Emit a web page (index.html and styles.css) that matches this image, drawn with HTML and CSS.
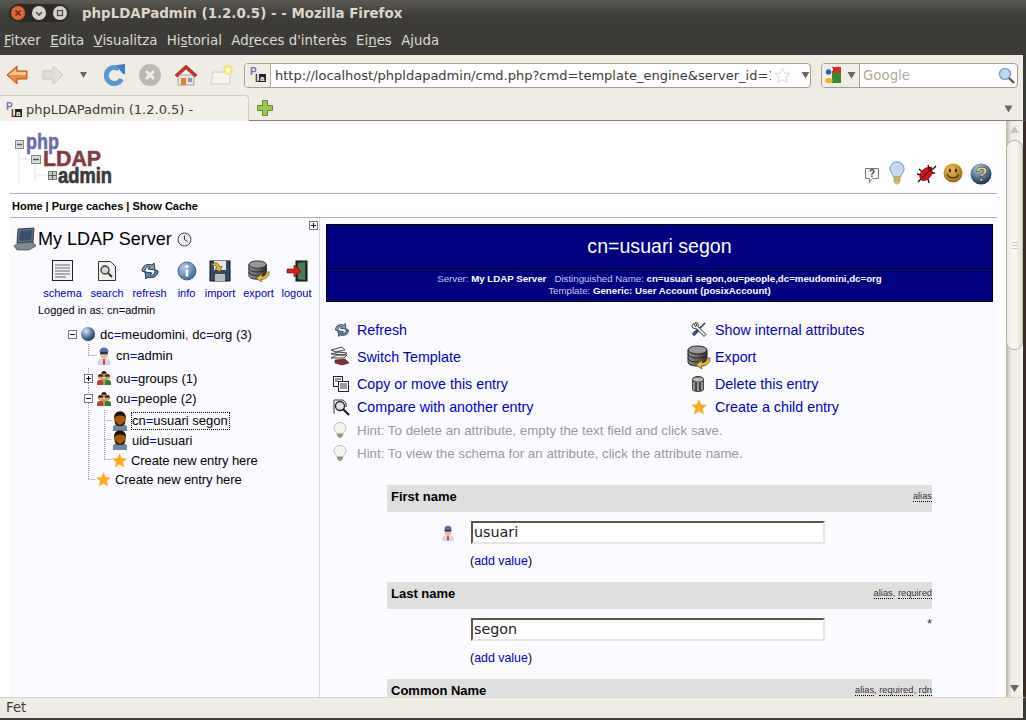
FILE: index.html
```html
<!DOCTYPE html>
<html lang="ca">
<head>
<meta charset="utf-8">
<title>phpLDAPadmin (1.2.0.5) - - Mozilla Firefox</title>
<link rel="stylesheet" href="styles.css">
</head>
<body>
<svg class="defs" width="0" height="0" aria-hidden="true">
  <defs>
    <radialGradient id="gBlue" cx="35%" cy="30%" r="80%"><stop offset="0" stop-color="#b8cfe6"/><stop offset="1" stop-color="#2f5f9a"/></radialGradient>
    <radialGradient id="gGlobe" cx="35%" cy="30%" r="75%"><stop offset="0" stop-color="#dfe8f2"/><stop offset=".55" stop-color="#5c7ea8"/><stop offset="1" stop-color="#1d3350"/></radialGradient>
    <radialGradient id="gSmile" cx="40%" cy="30%" r="75%"><stop offset="0" stop-color="#f0c050"/><stop offset="1" stop-color="#9a6010"/></radialGradient>
    <radialGradient id="gHelp" cx="40%" cy="25%" r="80%"><stop offset="0" stop-color="#b9cbdc"/><stop offset=".6" stop-color="#4a6c90"/><stop offset="1" stop-color="#12263e"/></radialGradient>
    <linearGradient id="gDb" x1="0" x2="1"><stop offset="0" stop-color="#8c8c8c"/><stop offset=".5" stop-color="#666"/><stop offset="1" stop-color="#333"/></linearGradient>
    <symbol id="i-refresh" viewBox="0 0 22 22">
      <path d="M3 11C3 6 8 3 13 5L15 3l1 7-7-1 2-2C8 6 6 8 6 12z" fill="#7f9fc0" stroke="#27384c" stroke-width="1"/>
      <path d="M19 11c0 5-5 8-10 6l-2 2-1-7 7 1-2 2c3 1 5-1 5-5z" fill="#5d83aa" stroke="#27384c" stroke-width="1"/>
    </symbol>
    <symbol id="i-star" viewBox="0 0 16 16">
      <path d="M8 .5l2.200 5 5.300.5-4 3.600 1.200 5.400L8 12.200 3.300 15l1.200-5.400-4-3.600 5.300-.5z" fill="#fbac1c" stroke="#f6c25a" stroke-width=".5"/>
    </symbol>
    <symbol id="i-man" viewBox="0 0 16 20">
      <path d="M1 20v-4c0-2 3-3 7-3s7 1 7 3v4z" fill="#6d87a5"/>
      <path d="M6 13h4l-2 3z" fill="#dde"/>
      <ellipse cx="8" cy="8" rx="6" ry="7.500" fill="#a5590f"/>
      <path d="M2 8C2 2 5 .5 8 .5S14 2 14 8c-1-3-3-3.500-6-3.500S3 5 2 8z" fill="#1a1208"/>
      <path d="M4 10c1 5 7 5 8 0l1 2c-1 3-3 3-5 3s-4 0-5-3z" fill="#2a1a08"/>
    </symbol>
    <symbol id="i-admin" viewBox="0 0 14 18">
      <path d="M1 18v-3c0-2 3-3 6-3s6 1 6 3v3z" fill="#d5d9e4" stroke="#9aa" stroke-width=".4"/>
      <path d="M6.300 12h1.400l.5 5-1.200 1-1.200-1z" fill="#d33"/>
      <ellipse cx="7" cy="7.500" rx="4" ry="4.500" fill="#f0b896"/>
      <path d="M2.500 5C3 1.500 5 .5 7 .5s4 1 4.500 4.500z" fill="#5a6ab8"/>
      <rect x="3" y="5" width="8" height="2.200" rx="1" fill="#23304f"/>
    </symbol>
    <symbol id="i-group" viewBox="0 0 16 16">
      <circle cx="8" cy="4" r="3" fill="#c9924f"/><path d="M5 3a3 3 0 0 1 6 0z" fill="#222"/>
      <path d="M4 16v-5c0-2 2-3 4-3s4 1 4 3v5z" fill="#b8a050"/>
      <circle cx="4" cy="7" r="2.800" fill="#e2a57a"/><path d="M1 6.500a3 3 0 0 1 6 0z" fill="#4a2410"/>
      <path d="M0 16v-3c0-2 2-3 4-3s3 1 3 3v3z" fill="#b8403a"/>
      <circle cx="12" cy="7" r="2.800" fill="#d79a62"/><path d="M9 6.500a3 3 0 0 1 6 0z" fill="#332"/>
      <path d="M9 16v-3c0-2 1-3 3-3s4 1 4 3v3z" fill="#3c7a3a"/>
    </symbol>
    <symbol id="i-minus" viewBox="0 0 9 9"><rect x=".5" y=".5" width="8" height="8" fill="#fff" stroke="#777"/><path d="M2 4.500h5" stroke="#111"/></symbol>
    <symbol id="i-plus" viewBox="0 0 9 9"><rect x=".5" y=".5" width="8" height="8" fill="#fff" stroke="#777"/><path d="M2 4.500h5M4.500 2v5" stroke="#111"/></symbol>
    <symbol id="i-bulb" viewBox="0 0 16 24">
      <path d="M8 1C4 1 1 4 1 8c0 3 3 5 3.500 8h7C12 13 15 11 15 8c0-4-3-7-7-7z" fill="#c8daf2" stroke="#6f96cc"/>
      <path d="M5 16h6v5l-2 2H7l-2-2z" fill="#e4cc6c" stroke="#a08a30" stroke-width=".6"/>
      <path d="M5 18h6M5 20h6" stroke="#a08a30" stroke-width=".7"/>
    </symbol>
    <symbol id="i-hint" viewBox="0 0 14 16">
      <path d="M7 .5C3.500.5 1 3 1 6c0 2.500 2.500 3.500 3 6h6c.5-2.500 3-3.500 3-6 0-3-2.500-5.500-6-5.500z" fill="#f4f4ef" stroke="#bdbdb5"/>
      <path d="M4.500 12h5v2l-1.500 1.500H6L4.500 14z" fill="#a09a78" stroke="#77704e" stroke-width=".5"/>
    </symbol>
    <symbol id="i-db" viewBox="0 0 24 24">
      <path d="M1 5v12c0 3 5 4 10 4s9-1 9-4V5z" fill="url(#gDb)" stroke="#222"/>
      <ellipse cx="10.500" cy="5" rx="9.500" ry="4" fill="#999" stroke="#222"/>
      <path d="M1 9c0 3 5 4 9.500 4S20 12 20 9M1 13c0 3 5 4 9.500 4S20 16 20 13" fill="none" stroke="#222"/>
      <path d="M23 13c0 5-3 8-9 8l1 3-6-4 6-5v3c3 0 5-2 5-5z" fill="#e8c040" stroke="#6a5410" stroke-width=".8"/>
    </symbol>
  </defs>
</svg>

<div class="window">
  <header class="titlebar">
    <div class="wm-buttons">
      <span class="wm wm-close"><svg width="14" height="14" viewBox="0 0 14 14"><path d="M4.500 4.500l5 5m0-5l-5 5" stroke="#6a2a12" stroke-width="1.600"/></svg></span>
      <span class="wm"><svg width="14" height="14" viewBox="0 0 14 14"><path d="M4 6l3 3 3-3" fill="none" stroke="#55514a" stroke-width="1.600"/></svg></span>
      <span class="wm"><svg width="14" height="14" viewBox="0 0 14 14"><rect x="4.500" y="4.500" width="5" height="5" fill="none" stroke="#55514a" stroke-width="1.400"/></svg></span>
    </div>
    <div class="title-text">phpLDAPadmin (1.2.0.5) - - Mozilla Firefox</div>
  </header>

  <nav class="menubar">
    <span><u>F</u>itxer</span><span><u>E</u>dita</span><span><u>V</u>isualitza</span><span>Hi<u>s</u>torial</span><span>Ad<u>r</u>eces d'interès</span><span>Ei<u>n</u>es</span><span>A<u>j</u>uda</span>
  </nav>

  <div class="toolbar">
    <svg class="tb-back" width="22" height="22" viewBox="0 0 22 22"><path d="M1 11L11 2v5h10v8H11v5z" fill="#ee8a35" stroke="#b9501a"/><path d="M3 11l7-6v3h10v3z" fill="#f8c78e"/></svg>
    <svg class="tb-fwd" width="22" height="22" viewBox="0 0 22 22"><path d="M21 11L11 2v5H1v8h10v5z" fill="#e2dfd8" stroke="#c9c5bb"/></svg>
    <svg class="tb-drop" width="10" height="8" viewBox="0 0 10 8"><path d="M1 1h7L4.500 7z" fill="#6a675f"/></svg>
    <svg class="tb-reload" width="22" height="22" viewBox="0 0 22 22"><path d="M17.500 15A8 8 0 1 1 15 5" fill="none" stroke="#5a96d6" stroke-width="5"/><path d="M12 1h1l8-1v10h-2z" fill="#3f7cc0"/></svg>
    <svg class="tb-stop" width="22" height="22" viewBox="0 0 22 22"><circle cx="11" cy="11" r="11" fill="#bdb9b1"/><path d="M7 7l8 8m0-8l-8 8" stroke="#efede8" stroke-width="2.600"/></svg>
    <svg class="tb-home" width="22" height="22" viewBox="0 0 22 22"><path d="M3 11v10h16V11z" fill="#e9e5dc" stroke="#8e887c" stroke-width=".7"/><path d="M11 1L0 11l2 2 9-8 9 8 2-2z" fill="#c6312c" stroke="#8f2320" stroke-width=".6"/><rect x="6" y="14" width="5" height="7" fill="#d9822b"/><rect x="13" y="14" width="4" height="4" fill="#8a97a8"/></svg>
    <svg class="tb-mark" width="24" height="22" viewBox="0 0 24 22"><path d="M3 8h17v12H1z" fill="#f6f4ef" stroke="#cfcabf"/><circle cx="18" cy="6" r="5" fill="#f5e76a"/><path d="M18 2.500l1 2.500 2.500.2-2 1.600.7 2.500-2.200-1.400-2.200 1.400.7-2.500-2-1.600 2.500-.2z" fill="#fff"/></svg>
    <div class="urlbar">
      <span class="site-id"><svg class="favicon" width="16" height="16" viewBox="0 0 16 16"><text x="0" y="8" class="fav-p">P</text><text x="5" y="15" class="fav-l">L</text><rect x="9" y="7" width="7" height="8" fill="#222"/><text x="10" y="14" class="fav-a">a</text></svg></span>
      <span class="url-text">http://localhost/phpldapadmin/cmd.php?cmd=template_engine&amp;server_id=1</span>
      <svg class="url-star" width="17" height="16" viewBox="0 0 17 16"><path d="M8.500 1l2.200 5 5.300.5-4 3.600 1.200 5.400-4.700-2.800-4.700 2.800 1.200-5.400-4-3.600 5.300-.5z" fill="#fff" stroke="#d8d5ce"/></svg>
      <svg class="url-drop" width="9" height="8" viewBox="0 0 9 8"><path d="M.5 1h8L4.500 7.500z" fill="#6a675f"/></svg>
    </div>
    <div class="searchbar">
      <span class="engine">
        <svg width="16" height="16" viewBox="0 0 16 16"><rect x="7" y="0" width="9" height="8" fill="#d92a20"/><rect x="7" y="6" width="9" height="10" fill="#2f8f2a"/><circle cx="3.500" cy="5" r="2.800" fill="#2a5fc0"/><ellipse cx="4" cy="13.500" rx="3.800" ry="2.500" fill="#f0b020"/><rect x="6" y="1" width="2" height="3" fill="#fff"/></svg>
        <svg width="9" height="8" viewBox="0 0 9 8"><path d="M.5 1h8L4.500 7.500z" fill="#6a675f"/></svg>
      </span>
      <span class="search-text">Google</span>
      <svg class="search-go" width="17" height="17" viewBox="0 0 17 17"><circle cx="7" cy="7" r="5.500" fill="#bcd7ef" stroke="#7fa6c8" stroke-width="1.500"/><path d="M11 11l5 5" stroke="#55534c" stroke-width="2.400"/></svg>
    </div>
  </div>

  <div class="tabbar">
    <div class="tab">
      <svg class="favicon" width="16" height="16" viewBox="0 0 16 16"><text x="0" y="8" class="fav-p">P</text><text x="5" y="15" class="fav-l">L</text><rect x="9" y="7" width="7" height="8" fill="#222"/><text x="10" y="14" class="fav-a">a</text></svg>
      <span>phpLDAPadmin (1.2.0.5) -</span>
    </div>
    <svg class="newtab" width="16" height="16" viewBox="0 0 16 16"><path d="M5.500.5h5v5h5v5h-5v5h-5v-5h-5v-5h5z" fill="#9cc552" stroke="#5f8c24"/></svg>
    <svg class="tab-drop" width="9" height="8" viewBox="0 0 9 8"><path d="M.5 .5h8L4.500 7.500z" fill="#6a675f"/></svg>
  </div>

  <div class="viewport">
    <main class="page">
      <div class="pla-head">
        <svg class="logo" width="100" height="54" viewBox="0 0 100 54">
          <path d="M4 14v36M20 30v18M4 25h16M20 41h18" stroke="#ccc" stroke-dasharray="1 1" fill="none"/>
          <rect x=".5" y="6.500" width="8" height="8" fill="#ddd" stroke="#888"/><path d="M2 10.500h5" stroke="#555" stroke-width="1.500"/>
          <rect x="16.500" y="21.500" width="9" height="8" fill="#ddd" stroke="#888"/><path d="M18 25.500h6" stroke="#555" stroke-width="1.500"/>
          <rect x="33.500" y="37.500" width="8" height="8" fill="#ccc" stroke="#777"/><path d="M34 41.500h7M37.500 38v7" stroke="#555"/>
          <text class="logo-php" x="11" y="15" textLength="33" lengthAdjust="spacingAndGlyphs">php</text>
          <text class="logo-ldap" x="28" y="32" textLength="58" lengthAdjust="spacingAndGlyphs">LDAP</text>
          <text class="logo-admin" x="43" y="49" textLength="54" lengthAdjust="spacingAndGlyphs">admin</text>
        </svg>
        <div class="head-icons">
          <svg class="hi-q" width="16" height="17" viewBox="0 0 16 17"><path d="M1.500 1.500h13v10h-6l-3 4v-4h-4z" fill="#f6f6f6" stroke="#777"/><text x="5" y="10" class="hi-qt">?</text></svg>
          <svg class="hi-bulb" width="16" height="24"><use href="#i-bulb"/></svg>
          <svg class="hi-bug" width="22" height="22" viewBox="0 0 22 22"><path d="M3 19l4-4M2 11l4 1M4 6l3 3M13 2l1 3M21 3l-3 3M20 10l-3 0M14 20l-1-4" stroke="#111" stroke-width="1.400"/><ellipse cx="11" cy="11" rx="5" ry="7.500" transform="rotate(40 11 11)" fill="#d4111a" stroke="#500" stroke-width=".6"/><circle cx="15.500" cy="6" r="2" fill="#a00" stroke="#300" stroke-width=".5"/><path d="M7 15L14 8" stroke="#111"/></svg>
          <svg class="hi-smile" width="20" height="20" viewBox="0 0 20 20"><circle cx="10" cy="10" r="9.500" fill="url(#gSmile)"/><ellipse cx="7" cy="7.500" rx="1.100" ry="2" fill="#321"/><ellipse cx="13" cy="7.500" rx="1.100" ry="2" fill="#321"/><path d="M4.500 11c1 5 10 5 11 0" fill="none" stroke="#321" stroke-width="1.200"/></svg>
          <svg class="hi-help" width="22" height="22" viewBox="0 0 22 22"><circle cx="11" cy="11" r="10.500" fill="url(#gHelp)"/><text x="5.500" y="18" class="hi-helpt">?</text></svg>
        </div>
      </div>

      <div class="pla-nav"><a>Home</a> | <a>Purge caches</a> | <a>Show Cache</a></div>

      <div class="panels">
        <aside class="tree-panel">
          <div class="tp-toggle"><svg width="9" height="9"><use href="#i-plus"/></svg></div>
          <div class="server">
            <svg width="24" height="24" viewBox="0 0 24 24"><path d="M5 2l16-1-1 14-16 1z" fill="#5a6f86" stroke="#222" stroke-width=".8"/><path d="M7 4l12-1-1 10-12 1z" fill="#39506c"/><path d="M1 19l4-3 15-1 3 4-7 4H4z" fill="#7f8a94" stroke="#333" stroke-width=".6"/></svg>
            <span class="server-name">My LDAP Server</span>
            <svg class="clock" width="15" height="15" viewBox="0 0 15 15"><circle cx="7.500" cy="7.500" r="6.500" fill="#eee" stroke="#444"/><path d="M7.500 3.500v4l3 2" fill="none" stroke="#333"/></svg>
          </div>
          <div class="tools">
            <a class="tool"><svg width="22" height="22" viewBox="0 0 22 22"><rect x=".5" y=".5" width="20" height="20" fill="#f2f2f2" stroke="#222"/><path d="M3 5h15M3 8h15M3 11h15M3 14h15M3 17h11" stroke="#667" stroke-width="1.200"/></svg><span>schema</span></a>
            <a class="tool"><svg width="22" height="22" viewBox="0 0 22 22"><path d="M2.500 1.500h12l5 5v14h-17z" fill="#f2f0ea" stroke="#333"/><circle cx="9" cy="10" r="4" fill="#cfd8e0" stroke="#333" stroke-width="1.300"/><path d="M12 13l4 4" stroke="#333" stroke-width="2"/></svg><span>search</span></a>
            <a class="tool"><svg width="22" height="22"><use href="#i-refresh"/></svg><span>refresh</span></a>
            <a class="tool"><svg width="20" height="22" viewBox="0 0 20 22"><circle cx="10" cy="11" r="9" fill="url(#gBlue)" stroke="#2c5078" stroke-width=".8"/><rect x="8.700" y="9.500" width="2.600" height="7" fill="#fff"/><circle cx="10" cy="6.500" r="1.600" fill="#fff"/></svg><span>info</span></a>
            <a class="tool"><svg width="22" height="22" viewBox="0 0 22 22"><rect x="1" y="1" width="20" height="20" fill="#344a66" stroke="#111"/><rect x="5" y="1" width="12" height="9" fill="#e8e8e8"/><rect x="6" y="14" width="10" height="7" fill="#bbb"/><path d="M2 6c3-5 7-4 9 1l2-1-2 6-5-3 2-1C7 5 5 5 2 6z" fill="#e0b030" stroke="#5a4510" stroke-width=".6"/></svg><span>import</span></a>
            <a class="tool"><svg width="22" height="22"><use href="#i-db"/></svg><span>export</span></a>
            <a class="tool"><svg width="22" height="22" viewBox="0 0 22 22"><rect x="10" y="1" width="11" height="20" fill="#1d3a24" stroke="#111"/><path d="M12 3l7-1v18l-7-1z" fill="#4b7a58"/><path d="M1 9h7V5l7 6-7 6v-4H1z" fill="#d6231a" stroke="#600" stroke-width=".6"/></svg><span>logout</span></a>
          </div>
          <div class="logged">Logged in as: cn=admin</div>

          <div class="tree">
            <div class="node n1">
              <svg class="exp" width="9" height="9"><use href="#i-minus"/></svg>
              <svg class="globe" width="14" height="14" viewBox="0 0 14 14"><circle cx="7" cy="7" r="7" fill="url(#gGlobe)"/></svg>
              <span class="t t1">dc<b>=</b>meudomini<i>,</i> dc<b>=</b>org (3)</span>
            </div>
            <div class="node n2">
              <svg class="conn" width="29" height="23"><path d="M.5 0v12M.5 11.500H9" class="dots"/></svg>
              <svg width="14" height="18"><use href="#i-admin"/></svg>
              <span class="t t2">cn<b>=</b>admin</span>
            </div>
            <div class="node n3">
              <svg class="conn2" width="13" height="20"><path d="M4.500 0v5M4.500 15v5" class="dots"/></svg>
              <svg class="exp" width="9" height="9"><use href="#i-plus"/></svg>
              <svg class="grp" width="14" height="14"><use href="#i-group"/></svg>
              <span class="t t2">ou<b>=</b>groups (1)</span>
            </div>
            <div class="node n4">
              <svg class="conn2" width="13" height="21"><path d="M4.500 0v5M4.500 15v6" class="dots"/></svg>
              <svg class="exp" width="9" height="9"><use href="#i-minus"/></svg>
              <svg class="grp" width="14" height="14"><use href="#i-group"/></svg>
              <span class="t t2">ou<b>=</b>people (2)</span>
            </div>
            <div class="node n5">
              <svg class="conn" width="44" height="22"><path d="M.5 0v22M16.500 0v22M16.500 10.500H24" class="dots"/></svg>
              <svg width="16" height="20"><use href="#i-man"/></svg>
              <span class="t t3 focus">cn<b>=</b>usuari segon</span>
            </div>
            <div class="node n6">
              <svg class="conn" width="44" height="20"><path d="M.5 0v20M16.500 0v20M16.500 9.500H24" class="dots"/></svg>
              <svg width="16" height="20"><use href="#i-man"/></svg>
              <span class="t t3b">uid<b>=</b>usuari</span>
            </div>
            <div class="node n7">
              <svg class="conn" width="44" height="20"><path d="M.5 0v20M16.500 0v10M16.500 9.500H24" class="dots"/></svg>
              <svg width="15" height="15"><use href="#i-star"/></svg>
              <span class="t t4">Create new entry here</span>
            </div>
            <div class="node n8">
              <svg class="conn" width="28" height="19"><path d="M.5 0v10M.5 9.500H8" class="dots"/></svg>
              <svg width="15" height="15"><use href="#i-star"/></svg>
              <span class="t t4">Create new entry here</span>
            </div>
          </div>
        </aside>

        <section class="entry">
          <div class="banner">
            <div class="banner-title">cn=usuari segon</div>
            <div class="banner-sub">
              <div>Server: <b>My LDAP Server</b> &nbsp; Distinguished Name: <b>cn=usuari segon,ou=people,dc=meudomini,dc=org</b></div>
              <div>Template: <b>Generic: User Account (posixAccount)</b></div>
            </div>
          </div>

          <div class="actions">
            <a class="act"><span class="ai"><svg width="18" height="18"><use href="#i-refresh"/></svg></span><span>Refresh</span></a>
            <a class="act"><span class="ai"><svg width="16" height="16" viewBox="0 0 16 16"><path d="M14 1L6 9" stroke="#333" stroke-width="1.500"/><path d="M7 8L2 13" stroke="#39506c" stroke-width="3.500"/><path d="M3 1.500c-2 1-2.500 3-1 4.500 1 .8 2 .8 3 .3l8 8.200 2-2-8-8.200c.5-1 .5-2-.3-3C6 .5 5 .5 4 .8L6 3 4.500 4.500z" fill="#e8e8e8" stroke="#222" stroke-width=".9"/></svg></span><span>Show internal attributes</span></a>
            <a class="act"><span class="ai ai-wide"><svg width="22" height="22" viewBox="0 0 22 22"><path d="M2 4l11-3 3 3-9 2zM2 8l13 1 3-2-9-1zM2 12l13 0 3-3-10 0z" fill="#e8e8e8" stroke="#222" stroke-width=".8"/><path d="M6 14l10-1 4 4-7 2-7-2z" fill="#8c2a2a" stroke="#222" stroke-width=".6"/></svg></span><span>Switch Template</span></a>
            <a class="act"><span class="ai ai-wide"><svg width="24" height="24"><use href="#i-db"/></svg></span><span>Export</span></a>
            <a class="act"><span class="ai"><svg width="16" height="16" viewBox="0 0 16 16"><rect x=".5" y=".5" width="9" height="10" fill="#fff" stroke="#222"/><rect x="5.500" y="5.500" width="10" height="10" fill="#fff" stroke="#222"/><path d="M2 3h6M2 5h3M7 8h7M7 10h7M7 12h7" stroke="#333"/></svg></span><span>Copy or move this entry</span></a>
            <a class="act"><span class="ai"><svg width="14" height="16" viewBox="0 0 14 16"><path d="M1 4C1 1 4 0 7 0s6 1 6 4v9c0 2-3 3-6 3s-6-1-6-3z" fill="#444"/><ellipse cx="7" cy="3.500" rx="5" ry="2" fill="#bbb"/><path d="M3 6v8M7 6v9M11 6v8" stroke="#ccc" stroke-width="1.200"/></svg></span><span>Delete this entry</span></a>
            <a class="act"><span class="ai"><svg width="17" height="17" viewBox="0 0 17 17"><path d="M1 15V1h9l3 3v4" fill="#fff" stroke="#333"/><circle cx="7" cy="7" r="4.500" fill="#dde" stroke="#222" stroke-width="1.300"/><path d="M10 10l6 6" stroke="#111" stroke-width="2"/></svg></span><span>Compare with another entry</span></a>
            <a class="act"><span class="ai"><svg width="16" height="16"><use href="#i-star"/></svg></span><span>Create a child entry</span></a>
            <div class="hint"><span class="ai"><svg width="14" height="16"><use href="#i-hint"/></svg></span><span>Hint: To delete an attribute, empty the text field and click save.</span></div>
            <div class="hint"><span class="ai"><svg width="14" height="16"><use href="#i-hint"/></svg></span><span>Hint: To view the schema for an attribute, click the attribute name.</span></div>
          </div>

          <div class="attrs">
            <div class="attr-head"><span>First name</span><small><abbr>alias</abbr></small></div>
            <div class="attr-body">
              <div class="attr-icon"><svg width="12" height="16"><use href="#i-admin"/></svg></div>
              <div class="attr-val"><div class="field">usuari</div><div class="addv">(<a>add value</a>)</div></div>
            </div>
            <div class="attr-head"><span>Last name</span><small><abbr>alias</abbr>, <abbr>required</abbr></small></div>
            <div class="attr-body">
              <div class="attr-icon"></div>
              <div class="attr-val"><div class="field">segon</div><div class="addv">(<a>add value</a>)</div></div>
              <div class="req">*</div>
            </div>
            <div class="attr-head"><span>Common Name</span><small><abbr>alias</abbr>, <abbr>required</abbr>, <abbr>rdn</abbr></small></div>
          </div>
        </section>
      </div>
    </main>

    <div class="scrollbar">
      <svg class="sb-arrow" width="9" height="7" viewBox="0 0 9 7"><path d="M4.500 0L9 7H0z" fill="#c9c3b6"/></svg>
      <div class="sb-thumb"><span></span><span></span><span></span></div>
      <div class="sb-track"></div>
      <svg class="sb-arrow" width="9" height="7" viewBox="0 0 9 7"><path d="M4.500 7L9 0H0z" fill="#6a675f"/></svg>
    </div>
  </div>

  <footer class="statusbar">Fet</footer>
</div>
</body>
</html>
```

FILE: styles.css
```css
* { box-sizing: border-box; }
html, body { margin: 0; padding: 0; height: 100%; overflow: hidden; }
body { font-family: "Liberation Sans", Arial, sans-serif; background: #3c3b37; }
.defs { display: block; height: 0; }
svg { display: block; flex: none; }
a { color: #0000c0; }

.window { width: 1026px; height: 720px; display: flex; flex-direction: column; overflow: hidden; }

/* title + menu */
.titlebar { height: 28px; display: flex; align-items: center; background: linear-gradient(#5a5852, #3e3d39 16px, #3c3b37); font: bold 13.4px "DejaVu Sans", sans-serif; color: #dcd6c8; }
.wm-buttons { display: flex; align-items: center; gap: 7px; margin-left: 9px; padding: 0 2px; height: 18px; border-radius: 9px; background: #2b2a27; margin-top: -2px; }
.wm { width: 14px; height: 14px; border-radius: 50%; background: #d8d4cb; display: flex; }
.wm-close { background: #e2663c; }
.title-text { margin-left: 13px; margin-top: -2px; }
.menubar { height: 27px; display: flex; align-items: center; background: #3c3b37; color: #dfdbd2; font: 13.3px "DejaVu Sans", sans-serif; padding: 0 0 2px 4px; gap: 9.5px; }
.menubar span { white-space: pre; }

/* toolbar */
.toolbar { height: 40px; display: flex; align-items: center; background: #efebe5; padding-left: 6px; border-right: 3px solid #3c3b37; }
.tb-fwd { margin-left: 14px; }
.tb-drop { margin-left: 15px; }
.tb-reload { margin-left: 15px; }
.tb-stop { margin-left: 13px; }
.tb-home { margin-left: 14px; }
.tb-mark { margin-left: 13px; }
.urlbar { margin-left: 10px; width: 567px; height: 25px; border: 1px solid #a99d88; border-radius: 4px; background: #fff; display: flex; align-items: center; overflow: hidden; }
.site-id { width: 26px; height: 23px; background: #f0ece6; border-right: 1px solid #b5ab98; display: flex; align-items: center; justify-content: center; flex: none; }
.url-text { width: 496px; margin-left: 4px; font: 13px "DejaVu Sans", sans-serif; color: #3c3b37; overflow: hidden; white-space: nowrap; flex: none; }
.url-star { margin-left: 3px; }
.url-drop { margin-left: 10px; }
.searchbar { margin-left: 10px; width: 197px; height: 25px; border: 1px solid #a99d88; border-radius: 4px; background: #fff; display: flex; align-items: center; overflow: hidden; }
.engine { width: 38px; height: 23px; background: #f0ece6; border-right: 1px solid #a99d88; display: flex; align-items: center; gap: 6px; padding-left: 3px; flex: none; }
.search-text { margin-left: 3px; flex: 1; font: 13.33px "DejaVu Sans", sans-serif; color: #b0a898; }
.search-go { margin-right: 2px; }

/* tabs */
.tabbar { height: 26px; display: flex; align-items: flex-start; background: #efebe5; border-bottom: 1px solid #8b7f6c; border-right: 3px solid #3c3b37; }
.tab { width: 249px; height: 26px; padding: 2px 0 0 6px; display: flex; align-items: center; gap: 4px; background: #f2eee8; border: 1px solid #d3ccbe; border-width: 1px 1px 0 0; border-radius: 0 4px 0 0; font: 13px "DejaVu Sans", sans-serif; color: #3c3b37; }
.favicon { flex: none; }
.fav-p { font: bold 10px "Liberation Sans", sans-serif; fill: #7a70a8; }
.fav-l { font: bold 10px "Liberation Sans", sans-serif; fill: #7a3030; }
.fav-a { font: bold 8px "Liberation Sans", sans-serif; fill: #fff; }
.newtab { margin: 5px 0 0 8px; }
.tab-drop { margin: 10px 10px 0 auto; }

/* viewport */
.viewport { height: 576px; display: flex; background: #fff; overflow: hidden; border-right: 3px solid #3a2c26; }
.page { width: 1006px; flex: none; padding-left: 10px; overflow: hidden; }

.pla-head { width: 987px; height: 73px; display: flex; align-items: flex-start; justify-content: space-between; border-bottom: 1px solid #aab; }
.logo { margin: 13px 0 0 5px; overflow: visible; }
.logo-php { font: bold 22px "Liberation Sans", sans-serif; fill: #6b6ba8; stroke: #6b6ba8; stroke-width: .5; }
.logo-ldap { font: bold 22px "Liberation Sans", sans-serif; fill: #823c40; stroke: #823c40; stroke-width: .5; }
.logo-admin { font: bold 22px "Liberation Sans", sans-serif; fill: #3a3a3a; stroke: #3a3a3a; stroke-width: .7; }
.head-icons { display: flex; align-items: flex-end; height: 64px; padding-right: 5px; }
.hi-q { margin-bottom: 1px; }
.hi-bulb { margin-left: 9px; }
.hi-bug { margin-left: 10px; }
.hi-smile { margin-left: 6px; margin-bottom: 2px; }
.hi-help { margin-left: 7px; }
.hi-qt { font: bold 10px "Liberation Sans", sans-serif; fill: #444; }
.hi-helpt { font: bold 20px "Liberation Sans", sans-serif; fill: #f0d88a; stroke: #222; stroke-width: .5; }

.pla-nav { width: 987px; height: 24px; padding: 5px 0 0 2px; border-bottom: 1px solid #aab; font: bold 11px/14px "Liberation Sans", sans-serif; color: #000; }
.pla-nav a { color: #000; }

.panels { width: 987px; height: 480px; display: flex; }

/* left tree */
.tree-panel { width: 310px; flex: none; background: #fbfbff; border-right: 1px solid #d5d5dc; }
.tp-toggle { height: 12px; display: flex; justify-content: flex-end; padding: 3px 1px 0 0; }
.server { height: 22px; display: flex; align-items: center; padding-left: 3px; margin-top: -2px; }
.server-name { font-size: 18px; margin-left: 1px; color: #000; white-space: nowrap; }
.clock { margin-left: 5px; }
.tools { display: grid; grid-template-columns: 39px 50px 35px 39px 28px 49px 27px; padding-left: 33px; margin-top: 10px; }
.tool { display: flex; flex-direction: column; align-items: center; font-size: 11px; line-height: 13px; gap: 5px; }
.logged { font-size: 11px; line-height: 13px; padding-left: 28px; margin-top: 4px; color: #000; }

.tree { margin-top: 7px; font-size: 13px; color: #000; }
.node { display: flex; align-items: center; white-space: nowrap; }
.n1 { height: 20px; padding-left: 58px; }
.n2 { height: 23px; padding-left: 78px; }
.n3, .n4 { padding-left: 74px; padding-top: 2px; }
.n3 { height: 20px; }
.n4 { height: 21px; }
.n5 { height: 22px; padding-left: 78px; padding-top: 3px; }
.n6, .n7 { height: 20px; padding-left: 78px; }
.n8 { height: 19px; padding-left: 78px; }
.node b { font-weight: normal; color: #0000e0; }
.node i { font-style: normal; color: #e00; }
.dots { fill: none; stroke: #999; stroke-dasharray: 1 1; }
.conn { margin-right: -20px; }
.conn2 { margin-right: -13px; }
.n1 .exp { margin-right: 4px; }
.n3 .exp, .n4 .exp { margin-right: 4px; }
.t1, .t2 { margin-left: 5px; }
.t3, .t3b { margin-left: 4px; }
.t4 { margin-left: 4px; letter-spacing: -.1px; }
.focus { outline: 1px dotted #000; padding: 0 1px 0 0; line-height: 16px; }

/* right entry */
.entry { flex: 1; background: #fbfbff; padding: 6px 4px 0 6px; min-width: 0; overflow: hidden; }
.banner { background: #000080; border: 1px solid #000; color: #fff; text-align: center; }
.banner-title { height: 44px; line-height: 42px; font-size: 19.6px; border-bottom: 1px solid #000; }
.banner-sub { height: 32px; font-size: 9.7px; line-height: 12px; padding-top: 4px; color: #c9c9e4; }
.banner-sub b { color: #fff; }

.actions { display: grid; grid-template-columns: 358px 1fr; grid-template-rows: 27px 27px 23px 23px 23px 23px; margin: 18px 0 0 6px; font-size: 14.3px; }
.act { height: 20px; display: flex; align-items: center; color: #0000c0; }
.ai { width: 25px; flex: none; display: flex; padding-left: 1px; }
.ai-wide { margin-left: -3px; width: 28px; padding-left: 0; }
.hint { grid-column: 1 / -1; height: 20px; display: flex; align-items: center; color: #999; font-size: 13.33px; }

.attrs { margin: 19px 0 0 61px; width: 545px; }
.attr-head { height: 27px; padding: 0 0 5px 4px; background: #dfdfdf; display: flex; align-items: center; justify-content: space-between; font-size: 13px; font-weight: bold; color: #000; }
.attr-head small { font-size: 9.3px; font-weight: normal; color: #333; }
.attr-head abbr { border-bottom: 1px dotted #000; }
.attr-body { height: 70px; display: flex; align-items: flex-start; padding-top: 9px; }
.attr-icon { width: 84px; flex: none; padding: 4px 0 0 55px; }
.attr-val { width: 354px; flex: none; }
.field { height: 23px; width: 354px; border: 2px solid; border-color: #5c5549 #e9e4de #e9e4de #5c5549; background: #fff; font: 14.3px/18px "DejaVu Sans", sans-serif; color: #222; padding-left: 1px; }
.addv { margin: 10px 0 0 -1px; font-size: 12.4px; line-height: 15px; color: #000; }
.addv a { color: #0000c0; }
.req { margin: -1px 0 0 auto; font-size: 13px; line-height: 14px; color: #333; }

/* scrollbar */
.scrollbar { width: 17px; flex: none; display: flex; flex-direction: column; align-items: center; background: linear-gradient(90deg, #bdb3a1, #efebe4 30%, #f4f1ec); }
.sb-arrow { margin: 5px 0; }
.sb-thumb { width: 17px; height: 210px; margin-top: 2px; border: 1px solid #bdb3a1; border-radius: 8px; background: linear-gradient(90deg, #efe9e0, #fbf9f6 50%, #e6dfd3); display: flex; flex-direction: column; align-items: center; justify-content: center; gap: 2px; }
.sb-thumb span { width: 6px; height: 1px; background: #cfc8bb; }
.sb-track { flex: 1; }

.statusbar { height: 23px; border-top: 1px solid #d9d3c6; border-bottom: 2px solid #3c3b37; border-right: 3px solid #3c3b37; background: #efebe5; padding-left: 6px; font: 13.3px/19px "DejaVu Sans", sans-serif; color: #3c3b37; width: 1026px; }
```
